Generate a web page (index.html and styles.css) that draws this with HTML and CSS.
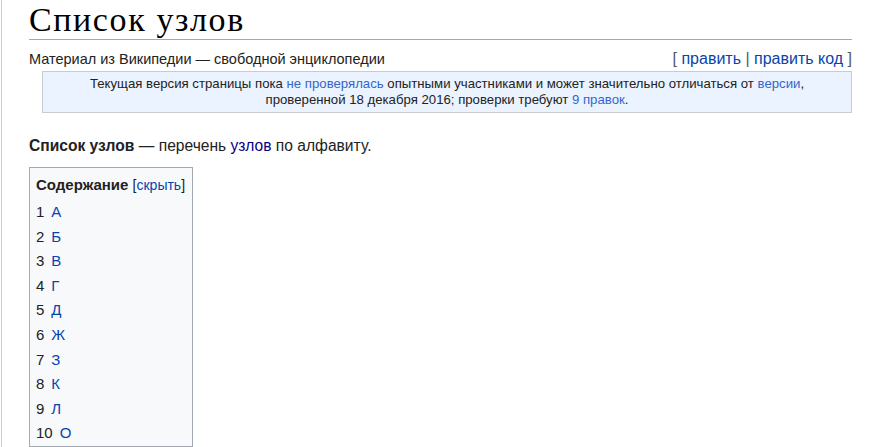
FILE: index.html
```html
<!DOCTYPE html>
<html lang="ru">
<head>
    <meta charset="UTF-8">
    <meta name="viewport" content="width=device-width, initial-scale=1.0">
    <title>Список узлов</title>
    <link rel="stylesheet" href="styles.css">
</head>
<body>
    <div class="content">
        <h1 class="first-heading">Список узлов</h1>
        <div class="site-sub">
            <span>Материал из Википедии — свободной энциклопедии</span>
            <span class="edit-links">[ <a href="#">править</a> | <a href="#">править код</a> ]</span>
        </div>
        <div class="review-notice">
            Текущая версия страницы пока <a href="#">не проверялась</a> опытными участниками и может значительно отличаться от <a href="#">версии</a>,<br>
            проверенной 18 декабря 2016; проверки требуют <a href="#">9 правок</a>.
        </div>

        <p class="lead"><b>Список узлов</b> — перечень <a href="#" class="visited">узлов</a> по алфавиту.</p>

        <div class="toc">
            <div class="toc-title"><b>Содержание</b> <span class="toc-toggle">[<a href="#">скрыть</a>]</span></div>
            <ul>
                <li><span class="num">1</span><a href="#">А</a></li>
                <li><span class="num">2</span><a href="#">Б</a></li>
                <li><span class="num">3</span><a href="#">В</a></li>
                <li><span class="num">4</span><a href="#">Г</a></li>
                <li><span class="num">5</span><a href="#">Д</a></li>
                <li><span class="num">6</span><a href="#">Ж</a></li>
                <li><span class="num">7</span><a href="#">З</a></li>
                <li><span class="num">8</span><a href="#">К</a></li>
                <li><span class="num">9</span><a href="#">Л</a></li>
                <li><span class="num">10</span><a href="#">О</a></li>
            </ul>
        </div>
    </div>
</body>
</html>
```

FILE: styles.css
```css
body {
    margin: 0;
    font-family: "Liberation Sans", Arial, sans-serif;
    color: #222;
    background: #fff;
}

a {
    color: #0645ad;
    text-decoration: none;
}

a.visited {
    color: #0b0080;
}

.content {
    margin-left: 1px;
    border-left: 1px solid #a7d7f9;
    padding: 0 26px 0 27px;
    min-height: 447px;
}

.first-heading {
    font-family: "Liberation Serif", "Times New Roman", serif;
    font-weight: normal;
    font-size: 34px;
    letter-spacing: 1.6px;
    line-height: 39px;
    margin: 0;
    border-bottom: 1px solid #a2a9b1;
    color: #000;
}

.site-sub {
    display: flex;
    justify-content: space-between;
    align-items: baseline;
    font-size: 14.5px;
    margin-top: 9px;
    line-height: 19px;
}

.edit-links {
    font-size: 16px;
    color: #54595d;
}

.review-notice {
    margin: 2px 0 0 13px;
    padding: 4px 8px;
    border: 1px solid #c8ccd1;
    background: #eaf3ff;
    text-align: center;
    font-size: 13.2px;
    line-height: 16px;
}

.review-notice a {
    color: #3366cc;
}

.lead {
    font-size: 15.6px;
    margin: 23px 0 11px;
    line-height: 20px;
}

.toc {
    display: inline-block;
    border: 1px solid #a2a9b1;
    background: #f8f9fa;
    padding: 7px 7px 0 6px;
    font-size: 15px;
}

.toc-title {
    line-height: 20px;
    margin-bottom: 5px;
}

.toc-toggle {
    font-size: 14px;
}

.toc ul {
    list-style: none;
    margin: 0;
    padding: 0;
}

.toc li {
    line-height: 24.6px;
}

.toc .num {
    margin-right: 7px;
}
```
